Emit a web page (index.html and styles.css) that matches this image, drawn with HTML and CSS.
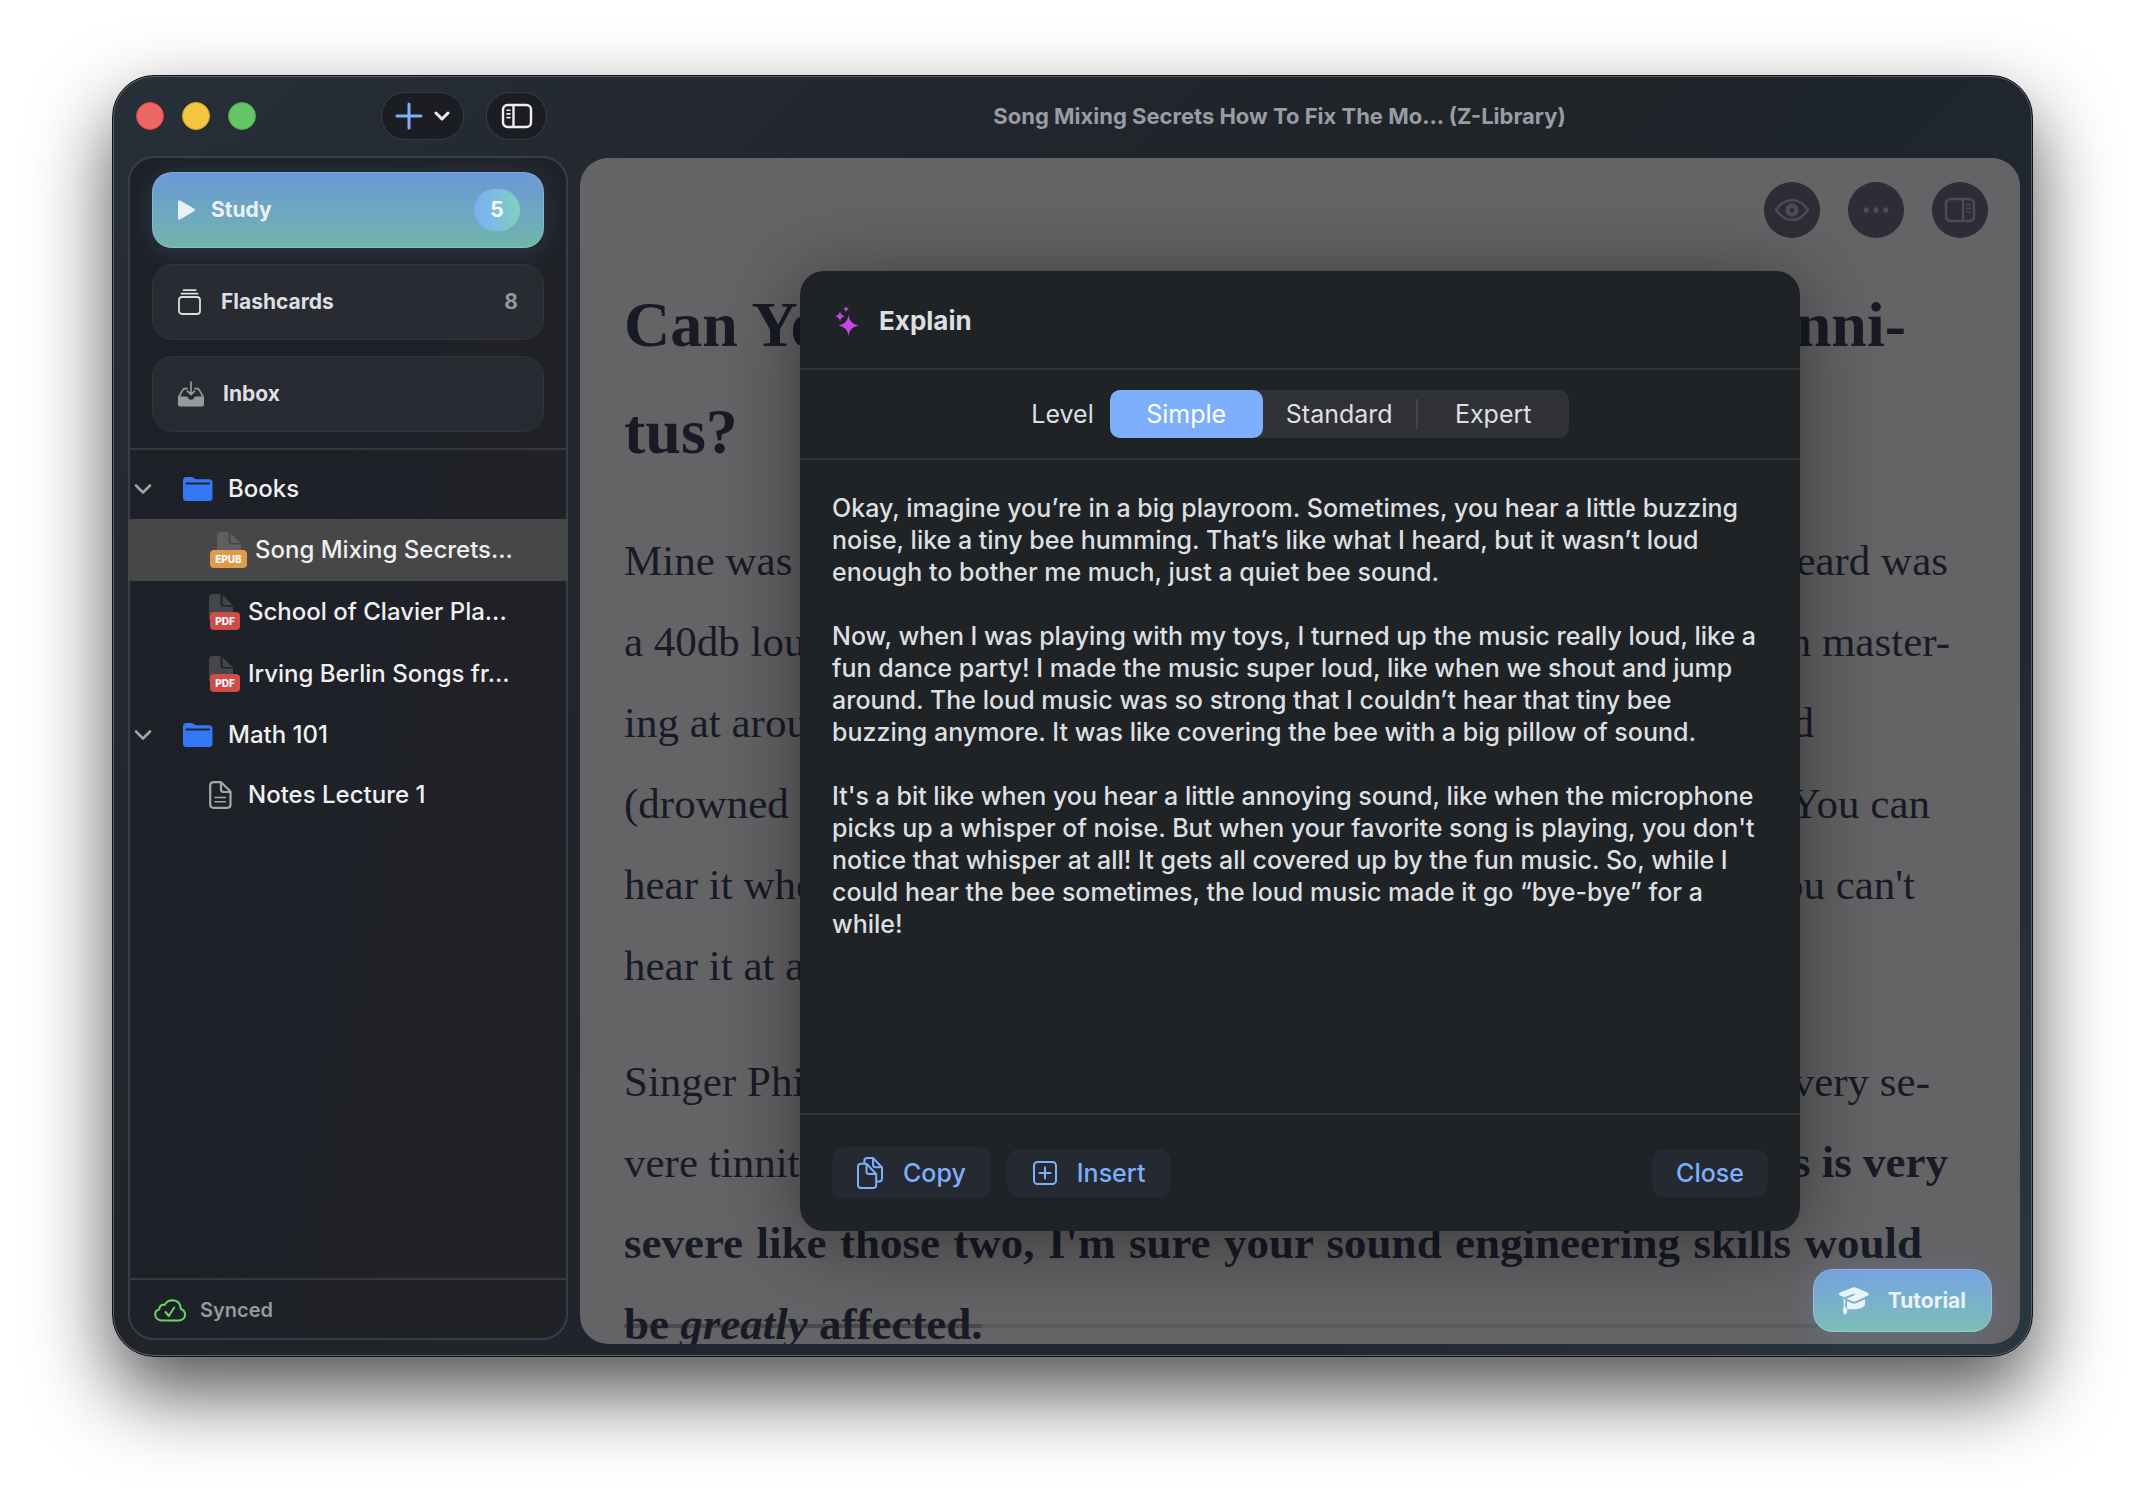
FILE: index.html
```html
<!DOCTYPE html>
<html lang="en">
<head>
<meta charset="utf-8">
<title>Song Mixing Secrets</title>
<link rel="stylesheet" href="styles.css">
</head>
<body>
<div class="desktop">
  <div class="window">
    <aside class="side">
      <div class="side-bar">
        <div class="lights">
          <button class="light red" aria-label="Close window"></button>
          <button class="light yellow" aria-label="Minimize window"></button>
          <button class="light green" aria-label="Zoom window"></button>
        </div>
        <div class="tools">
          <button class="pill pill-add" aria-label="Add">
            <svg width="28" height="28" viewBox="0 0 28 28" fill="none" stroke="#7eaffc" stroke-width="3" stroke-linecap="round"><path d="M14 2v24M2 14h24"/></svg>
            <svg width="16" height="10" viewBox="0 0 16 10" fill="none" stroke="#eeeeef" stroke-width="3" stroke-linecap="round" stroke-linejoin="round"><path d="M2 2l6 6 6-6"/></svg>
          </button>
          <button class="pill" aria-label="Toggle sidebar">
            <svg width="32" height="26" viewBox="0 0 32 26" fill="none" stroke="#eeeeef" stroke-width="2.4" stroke-linecap="round"><rect x="2" y="2" width="28" height="22" rx="4.5"/><path d="M12.5 2v22"/><path stroke-width="1.6" d="M6 7.2h3M6 10.9h3M6 14.6h3"/></svg>
          </button>
        </div>
      </div>
      <div class="panel">
        <div class="actions">
          <button class="action action-study">
            <svg width="17" height="20" viewBox="0 0 17 20" fill="#e8f1f7"><path d="M0 1.8Q0 -.4 2 .6L16 8.6Q18 10 16 11.2L2 19.4Q0 20.3 0 18.4z"/></svg>
            <span>Study</span><span class="badge">5</span>
          </button>
          <button class="action action-cards">
            <svg width="24" height="26" viewBox="0 0 24 26" fill="none" stroke="#dddde0" stroke-width="1.8" stroke-linecap="round"><rect x="1" y="8" width="21" height="17" rx="3"/><path d="M3.5 4.6h16M5.6 1.2h12"/></svg>
            <span>Flashcards</span><span class="count">8</span>
          </button>
          <button class="action action-inbox">
            <svg width="26" height="26" viewBox="0 0 26 26"><path fill="#98999e" d="M0 15.5h8.6q1 0 1.2 1 .6 2.2 3.2 2.200t3.200-2.200q.2-1 1.200-1H26V23q0 2.600-2.600 2.600H2.600Q0 25.600 0 23z"/><path fill="none" stroke="#98999e" stroke-width="1.700" stroke-linecap="round" stroke-linejoin="round" d="M1 15.500L5 8.600Q5.600 7.600 6.800 7.600H9M25 15.500L21 8.600Q20.400 7.600 19.200 7.600H17M13 1v12.500M9.500 10.200l3.500 3.500 3.500-3.500"/></svg>
            <span>Inbox</span>
          </button>
        </div>
        <ul class="tree">
          <li><a class="row folder" href="#books">
            <svg class="chev" width="18" height="12" viewBox="0 0 18 12" fill="none" stroke="#a0a1a4" stroke-width="2.600" stroke-linecap="round" stroke-linejoin="round"><path d="M2 2.500l7 7 7-7"/></svg>
            <svg width="30" height="24" viewBox="0 0 30 24"><path fill="#3478f6" d="M0 3.500Q0 0 3.500 0H8q1.500 0 2.600 1l.8.600q.8.600 2 .600H26q3.500 0 3.500 3.500V20.500q0 3.500-3.500 3.500H3.500Q0 24 0 20.500z"/><path stroke="#1e222b" stroke-width="2" stroke-linecap="round" d="M3.500 6.400H26"/></svg>
            <span>Books</span></a></li>
          <li><a class="row file selected" href="#song" aria-current="page">
            <span class="doc doc-epub"><svg width="24" height="26" viewBox="0 0 24 26" fill="#5f5f61"><path d="M0 4Q0 0 4 0H11.500V9.500Q11.500 12.600 14.600 12.600H24V26H0z"/><path d="M13.500 1L23.500 11H15Q13.500 11 13.500 9.500z"/></svg><span class="tag">EPUB</span></span>
            <span>Song Mixing Secrets...</span></a></li>
          <li><a class="row file" href="#clavier">
            <span class="doc doc-pdf"><svg width="24" height="26" viewBox="0 0 24 26" fill="#45464a"><path d="M0 4Q0 0 4 0H11.500V9.500Q11.500 12.600 14.600 12.600H24V26H0z"/><path d="M13.500 1L23.500 11H15Q13.500 11 13.500 9.500z"/></svg><span class="tag">PDF</span></span>
            <span>School of Clavier Pla...</span></a></li>
          <li><a class="row file" href="#berlin">
            <span class="doc doc-pdf"><svg width="24" height="26" viewBox="0 0 24 26" fill="#45464a"><path d="M0 4Q0 0 4 0H11.500V9.500Q11.500 12.600 14.600 12.600H24V26H0z"/><path d="M13.500 1L23.500 11H15Q13.500 11 13.500 9.500z"/></svg><span class="tag">PDF</span></span>
            <span>Irving Berlin Songs fr...</span></a></li>
          <li><a class="row folder" href="#math">
            <svg class="chev" width="18" height="12" viewBox="0 0 18 12" fill="none" stroke="#a0a1a4" stroke-width="2.600" stroke-linecap="round" stroke-linejoin="round"><path d="M2 2.500l7 7 7-7"/></svg>
            <svg width="30" height="24" viewBox="0 0 30 24"><path fill="#3478f6" d="M0 3.500Q0 0 3.500 0H8q1.500 0 2.600 1l.8.600q.8.600 2 .600H26q3.500 0 3.500 3.500V20.500q0 3.500-3.500 3.500H3.500Q0 24 0 20.500z"/><path stroke="#1e222b" stroke-width="2" stroke-linecap="round" d="M3.500 6.400H26"/></svg>
            <span>Math 101</span></a></li>
          <li><a class="row file note" href="#notes">
            <svg width="23" height="28" viewBox="0 0 23 28" fill="none" stroke="#a6a7aa" stroke-width="2.200" stroke-linecap="round" stroke-linejoin="round"><path d="M4.500 1.200H12L21.500 10.500V23.500Q21.500 26.800 18.300 26.800H4.500Q1.200 26.800 1.200 23.500V4.500Q1.200 1.200 4.500 1.200z"/><path d="M12 1.500V8.500Q12 11 14.500 11H21"/><path stroke-width="1.600" d="M6 16.500h10.500M6 20.800h10.500"/></svg>
            <span>Notes Lecture 1</span></a></li>
        </ul>
        <div class="sync">
          <svg width="32" height="23" viewBox="0 0 32 23" fill="none" stroke="#66d667" stroke-width="2" stroke-linecap="round" stroke-linejoin="round"><path d="M7.500 21.500H25Q31 21 31 15.500 31 11.500 26.800 10 26.500 1.500 18.500 1.200 13 1.200 10.800 5.800 5.800 5 5.200 10.300 1.200 11.500 1.200 15.500 1.500 21 7.500 21.500z"/><path d="M11.500 13l3.300 4 5.400-8.500"/></svg>
          <span>Synced</span>
        </div>
      </div>
    </aside>
    <main class="main">
      <header class="title">Song Mixing Secrets How To Fix The Mo... (Z-Library)</header>
      <div class="reader">
        <div class="reader-tools">
          <button class="round" aria-label="View"><svg width="36" height="24" viewBox="0 0 36 24" fill="none" stroke="#4b4c57" stroke-width="2.600"><path d="M2 12Q9 2 18 2t16 10Q27 22 18 22T2 12z"/><circle cx="18" cy="12" r="4.500" stroke-width="4.500"/></svg></button>
          <button class="round" aria-label="More"><svg width="26" height="8" viewBox="0 0 26 8" fill="#4b4c57"><circle cx="3.200" cy="4" r="2.700"/><circle cx="13" cy="4" r="2.700"/><circle cx="22.800" cy="4" r="2.700"/></svg></button>
          <button class="round" aria-label="Toggle notes panel"><svg width="32" height="26" viewBox="0 0 32 26" fill="none" stroke="#4b4c57" stroke-width="2.400" stroke-linecap="round"><rect x="2" y="2" width="28" height="22" rx="4.500"/><path d="M19 2v22"/><path stroke-width="1.700" d="M23 7.600h3.500M23 11.300h3.500M23 15h3.500"/></svg></button>
        </div>
        <progress class="progress" value="27" max="100" aria-label="Reading progress"></progress>
        <article class="book">
          <h1><span class="line in-44"><span>Can You</span><span>Tinni-</span></span><span class="line">tus?</span></h1>
          <p>
            <span class="line in-2"><span>Mine was</span><span>heard was</span></span>
            <span class="line"><span>a 40db loud</span><span>in master-</span></span>
            <span class="line in-136"><span>ing at around</span><span>and</span></span>
            <span class="line in-20"><span>(drowned</span><span>You can</span></span>
            <span class="line in-35"><span>hear it when</span><span>you can't</span></span>
            <span class="line">hear it at all</span>
          </p>
          <p>
            <span class="line in-20"><span>Singer Phil</span><span>very se-</span></span>
            <span class="line in-2"><span>vere tinnitus</span><b>this is very</b></span>
            <span class="line in-28 full"><b>severe like those two, I'm sure your sound engineering skills would</b></span>
            <span class="line"><b>be <i>greatly</i> affected.</b></span>
          </p>
        </article>
        <button class="tutorial">
          <svg width="30" height="28" viewBox="0 0 30 28"><path fill="#e9f3f8" d="M0 7.200Q0 6 1.200 5.500L13.500.5Q15 0 16.500.5L28.500 5.600Q29.600 6.200 29.600 7.200T28.500 8.800L17 14.300Q15 15.200 13 14.300L7.200 11.600 15 8.600Q16 8.200 15.700 7.400T14.600 6.800L5.500 10.300 1.200 8.600Q0 8.200 0 7.200z"/><path fill="#e9f3f8" d="M8 14l5 2.300q2 .8 4 0L26 12.300V17.500q-.5 3.500-9 4.800H8z"/><path fill="#e9f3f8" d="M4.500 11.500l1.700.7v7.500q2 2 2 4.300t-2.200 4q-2-1.700-2-4t.8-4.500z"/></svg>
          <span>Tutorial</span>
        </button>
        <div class="overlay">
          <section class="modal" role="dialog" aria-labelledby="explain-title">
            <header class="modal-head">
              <svg width="24" height="30" viewBox="0 0 24 30" fill="#c846e8"><path d="M13.500 9Q14.500 18 23.500 19.500 14.500 21 13.500 30 12.500 21 3.500 19.500 12.500 18 13.500 9z"/><path d="M5 5Q5.500 9.500 9.800 10.200 5.500 11 5 15.500 4.500 11 .2 10.200 4.500 9.500 5 5z"/><path d="M11 0Q11.300 2.700 14 3.100 11.300 3.500 11 6.200 10.700 3.500 8 3.100 10.700 2.700 11 0z"/></svg>
              <h2 id="explain-title">Explain</h2>
            </header>
            <div class="level">
              <span id="level-label">Level</span>
              <div class="segments" role="radiogroup" aria-labelledby="level-label">
                <label class="segment"><input type="radio" name="level" checked><span>Simple</span></label>
                <label class="segment"><input type="radio" name="level"><span>Standard</span></label>
                <label class="segment"><input type="radio" name="level"><span>Expert</span></label>
              </div>
            </div>
            <div class="modal-body">
              <p>Okay, imagine you’re in a big playroom. Sometimes, you hear a little buzzing<br>noise, like a tiny bee humming. That’s like what I heard, but it wasn’t loud<br>enough to bother me much, just a quiet bee sound.</p>
              <p>Now, when I was playing with my toys, I turned up the music really loud, like a<br>fun dance party! I made the music super loud, like when we shout and jump<br>around. The loud music was so strong that I couldn’t hear that tiny bee<br>buzzing anymore. It was like covering the bee with a big pillow of sound.</p>
              <p>It's a bit like when you hear a little annoying sound, like when the microphone<br>picks up a whisper of noise. But when your favorite song is playing, you don't<br>notice that whisper at all! It gets all covered up by the fun music. So, while I<br>could hear the bee sometimes, the loud music made it go “bye-bye” for a<br>while!</p>
            </div>
            <footer class="modal-foot">
              <button class="btn btn-tall"><svg width="26" height="32" viewBox="0 0 26 32" fill="none" stroke="#7eaffc" stroke-width="2" stroke-linejoin="round"><path d="M4 6.800H9.500L19.200 17V28Q19.200 31 16.200 31H4Q1 31 1 28V9.800Q1 6.800 4 6.800z"/><path d="M9.500 7V14.500Q9.500 17 12 17H19"/><path d="M7.300 6.500V4Q7.300 1 10.300 1H16L25 10.500V21.500Q25 24.500 22 24.500H19.500"/><path d="M16 1.200V7.500Q16 10.200 18.500 10.200H24.800"/></svg><span>Copy</span></button>
              <button class="btn"><svg width="24" height="24" viewBox="0 0 24 24" fill="none" stroke="#7eaffc" stroke-width="2" stroke-linecap="round"><rect x="1" y="1" width="22" height="22" rx="3.500"/><path d="M12 6.500v11M6.500 12h11"/></svg><span>Insert</span></button>
              <button class="btn btn-close">Close</button>
            </footer>
          </section>
        </div>
      </div>
    </main>
  </div>
</div>
</body>
</html>
```
FILE: styles.css
```css
* { box-sizing: border-box; }

body {
  margin: 0;
  background: #fff;
  font-family: Inter, "Liberation Sans", sans-serif;
  font-size: 25px;
  line-height: 32px;
  color: #f0f0f1;
}

button {
  margin: 0;
  padding: 0;
  border: 0;
  background: none;
  font: inherit;
  color: inherit;
}

svg { display: block; flex: none; }

h1, h2, p, ul { margin: 0; padding: 0; }

.desktop {
  display: flex;
  height: 100vh;
  padding: 75px 111px 147px 112px;
}

.window {
  flex: 1;
  display: flex;
  min-width: 0;
  padding: 1px;
  border: 1px solid #101214;
  border-radius: 42px;
  background: linear-gradient(135deg, #272f38 0%, #22262f 25%, #202428 45%, #1f2630 60%, #222831 78%, #2b3740 100%);
  box-shadow: inset 0 0 0 1px #5b6266, 0 36px 80px rgba(0, 0, 0, .68);
}

/* Sidebar */
.side {
  flex: none;
  display: flex;
  flex-direction: column;
  width: 466px;
  padding: 0 12px 15px 14px;
}

.side-bar {
  flex: none;
  display: flex;
  justify-content: space-between;
  align-items: center;
  height: 79px;
  padding: 0 21px 2px 8px;
}

.lights { display: flex; gap: 18px; }

.light {
  width: 28px;
  height: 28px;
  border: 1px solid;
  border-radius: 50%;
}
.red { background: #ed6766; border-color: #e0403f; }
.yellow { background: #f3c841; border-color: #dda916; }
.green { background: #65c466; border-color: #3fae40; }

.tools { display: flex; gap: 22px; }

.pill {
  display: flex;
  align-items: center;
  justify-content: center;
  gap: 11px;
  width: 61px;
  height: 48px;
  border: 1px solid #353d49;
  border-radius: 24px;
  background: #1b1d22;
}
.pill-add { width: 83px; }

.panel {
  flex: 1;
  display: flex;
  flex-direction: column;
  min-height: 0;
  border: 2px solid #353f4b;
  border-radius: 26px;
  background: linear-gradient(100deg, #1d2127, #1e2128 40%, #212226);
}

.actions {
  display: flex;
  flex-direction: column;
  gap: 16px;
  padding: 14px 22px 16px;
  border-bottom: 2px solid #36383c;
}

.action {
  display: flex;
  align-items: center;
  height: 76px;
  padding: 0 25px;
  border: 1px solid #313339;
  border-radius: 20px;
  background: #292b33;
  font-size: 21px;
  font-weight: 700;
  color: #dfdfe1;
}
.action-study {
  gap: 16px;
  padding-right: 23px;
  border-color: rgba(255, 255, 255, .16);
  background: linear-gradient(#6b99d9, #70b5ab) border-box;
  box-shadow: 0 4px 28px rgba(107, 153, 217, .2);
  color: #e9f1f7;
}
.action-cards, .action-inbox { gap: 19px; }

.badge {
  margin-left: auto;
  width: 46px;
  border-radius: 21px;
  background: linear-gradient(90deg, #7aaef5, #80d0c0);
  line-height: 42px;
  text-align: center;
  color: #fff;
}
.count { margin-left: auto; color: #97989c; }

.tree {
  flex: 1;
  margin: 0 -2px;
  padding-top: 9px;
  list-style: none;
  font-size: 24px;
  font-weight: 500;
}

.row {
  display: flex;
  align-items: center;
  height: 60px;
  color: inherit;
  text-decoration: none;
}
.folder { gap: 15px; padding-left: 6px; }
.folder .chev { margin-right: 16px; }
.file { gap: 8px; height: 62px; padding-left: 81px; }
.selected { background: #474747; }
.note { gap: 16px; height: 60px; }

/* File glyph with a format tag laid over its foot */
.doc { position: relative; height: 36px; }
.doc-epub { width: 38px; padding-left: 8px; }
.doc-pdf { width: 31px; }
.tag {
  position: absolute;
  left: 1px;
  right: 0;
  bottom: 0;
  border-radius: 4px;
  background: #d04c48;
  font-size: 10px;
  font-weight: 800;
  line-height: 18px;
  text-align: center;
  color: #fff;
}
.doc-epub .tag { background: #e09a48; }

.sync {
  display: flex;
  align-items: center;
  gap: 14px;
  height: 60px;
  margin: 0 -2px;
  padding: 2px 0 0 26px;
  border-top: 2px solid #36383c;
  font-size: 20px;
  font-weight: 600;
  color: #98999c;
}

/* Main column */
.main {
  flex: 1;
  display: flex;
  flex-direction: column;
  min-width: 0;
  padding: 0 11px 11px 0;
}

.title {
  flex: none;
  padding: 0 41px 3px 0;
  font-size: 22px;
  font-weight: 700;
  line-height: 78px;
  text-align: center;
  color: #989ca4;
}

.reader {
  flex: 1;
  position: relative;
  min-height: 0;
  overflow: hidden;
  border-radius: 28px;
  background: #646466;
}

.reader-tools {
  position: absolute;
  top: 24px;
  right: 32px;
  display: flex;
  gap: 28px;
}

.round {
  display: flex;
  align-items: center;
  justify-content: center;
  width: 56px;
  height: 56px;
  border-radius: 50%;
  background: #2c2d36;
}

.book {
  position: relative;
  display: flex;
  flex-direction: column;
  gap: 35px;
  padding: 113px 70px 0 44px;
  font-family: "Liberation Serif", serif;
  font-size: 43px;
  line-height: 81px;
  color: #181b26;
}
.book h1 { font-size: 64px; line-height: 107px; }

.line {
  display: flex;
  justify-content: space-between;
  white-space: nowrap;
}
.line b { font-size: 45px; }
.full { display: block; text-align-last: justify; white-space: normal; }
.in-2 { padding-right: 2px; }
.in-20 { padding-right: 20px; }
.in-28 { padding-right: 28px; }
.in-35 { padding-right: 35px; }
.in-44 { padding-right: 44px; }
.in-136 { padding-right: 136px; }

.progress {
  position: absolute;
  left: 44px;
  bottom: 16px;
  width: calc(100% - 114px);
  height: 4px;
  appearance: none;
  border: 0;
  background: #5b5b5d;
}
.progress::-webkit-progress-bar { border-radius: 2px; background: #5b5b5d; }
.progress::-webkit-progress-value { border-radius: 2px; background: #4a4a4c; }

.tutorial {
  position: absolute;
  right: 28px;
  bottom: 12px;
  display: flex;
  align-items: center;
  gap: 19px;
  height: 63px;
  padding: 0 25px;
  border: 1px solid rgba(255, 255, 255, .2);
  border-radius: 20px;
  background: linear-gradient(#77a3e3, #7bbfb6) border-box;
  box-shadow: 0 4px 28px rgba(119, 140, 200, .3);
  font-size: 21px;
  font-weight: 700;
  color: #e9f3f8;
}

/* Explain dialog */
.overlay {
  position: absolute;
  inset: 0;
  display: grid;
  place-items: center;
}

.modal {
  display: flex;
  flex-direction: column;
  width: min(1000px, 90%);
  height: calc(100% - 226px);
  border-radius: 24px;
  background: #1f2326;
  box-shadow: 0 10px 80px rgba(0, 0, 0, .45);
  color: #dedfe0;
}

.modal-head {
  display: flex;
  align-items: center;
  gap: 20px;
  height: 99px;
  padding: 2px 35px 0;
  border-bottom: 2px solid #323639;
}
.modal-head h2 { font-size: 26px; font-weight: 700; }

.level {
  display: flex;
  align-items: center;
  justify-content: center;
  gap: 16px;
  height: 90px;
  border-bottom: 2px solid #323639;
}

.segments {
  display: flex;
  border-radius: 10px;
  background: #313237;
}
.segment {
  position: relative;
  width: 153px;
  line-height: 48px;
  text-align: center;
}
.segment input {
  position: absolute;
  inset: 0;
  margin: 0;
  appearance: none;
  border-radius: 10px;
}
.segment input:checked { background: #7eaffc; }
.segment span { position: relative; }
.segment input:checked + span { color: #fff; }
.segment:last-child { border-left: 2px solid transparent; border-image: linear-gradient(transparent 20%, #45464b 20% 80%, transparent 80%) 1; }

.modal-body {
  flex: 1;
  display: flex;
  flex-direction: column;
  gap: 32px;
  padding: 32px;
  font-weight: 500;
  white-space: nowrap;
}

.modal-foot {
  display: flex;
  align-items: center;
  gap: 16px;
  height: 118px;
  padding: 0 32px;
  border-top: 2px solid #323639;
}

.btn {
  display: flex;
  align-items: center;
  gap: 20px;
  height: 48px;
  padding: 0 26px;
  border-radius: 12px;
  background: #252931;
  font-weight: 500;
  color: #7eaffc;
}
.btn-tall { height: 52px; padding: 0 25px; }
.btn-close { margin-left: auto; padding: 0 24px; }
```
